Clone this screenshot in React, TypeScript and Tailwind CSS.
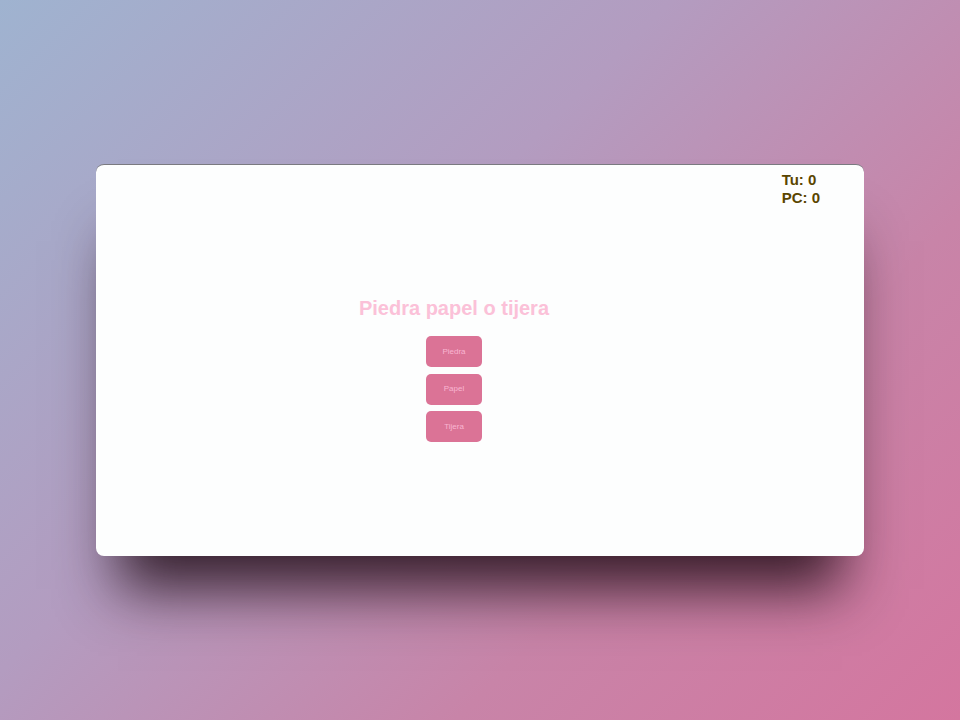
import React, { useState } from 'react';

type Choice = 'Piedra' | 'Papel' | 'Tijera';

const choices: Choice[] = ['Piedra', 'Papel', 'Tijera'];

const beats: Record<Choice, Choice> = {
  Piedra: 'Tijera',
  Papel: 'Piedra',
  Tijera: 'Papel',
};

export default function App() {
  const [tu, setTu] = useState(0);
  const [pc, setPc] = useState(0);

  const play = (c: Choice) => {
    const other = choices[Math.floor(Math.random() * 3)];
    if (beats[c] === other) setTu((n) => n + 1);
    else if (beats[other] === c) setPc((n) => n + 1);
  };

  return (
    <div
      className="w-[960px] h-[720px] flex items-center justify-center bg-[linear-gradient(135deg,#9fb3d0_0%,#b39cc0_40%,#c884a8_70%,#d4769f_100%)]"
      style={{ fontFamily: '"Liberation Sans", Arial, sans-serif' }}
    >
      <div className="relative w-[768px] h-[392px] bg-[#fdfefe] rounded-lg border-t border-[#7a7a80] shadow-[0_55px_55px_-22px_rgba(30,10,20,0.85)] flex">
        <div className="flex-1 pr-[52px] pt-[131px] flex flex-col items-center">
          <h1 className="text-[20px] leading-6 font-bold text-[#fbc1d8]">
            Piedra papel o tijera
          </h1>
          <div className="mt-[16px] flex flex-col gap-[6.5px]">
            {choices.map((c) => (
              <button
                key={c}
                onClick={() => play(c)}
                className="w-[56px] h-[31px] rounded-[5px] bg-[#db7396] text-[#f9b6d2] text-[8px]"
              >
                {c}
              </button>
            ))}
          </div>
        </div>
        <div className="absolute top-[6px] right-[44px] text-[15px] leading-[18px] font-bold text-[#5a4500]">
          <div>Tu: {tu}</div>
          <div>PC: {pc}</div>
        </div>
      </div>
    </div>
  );
}
